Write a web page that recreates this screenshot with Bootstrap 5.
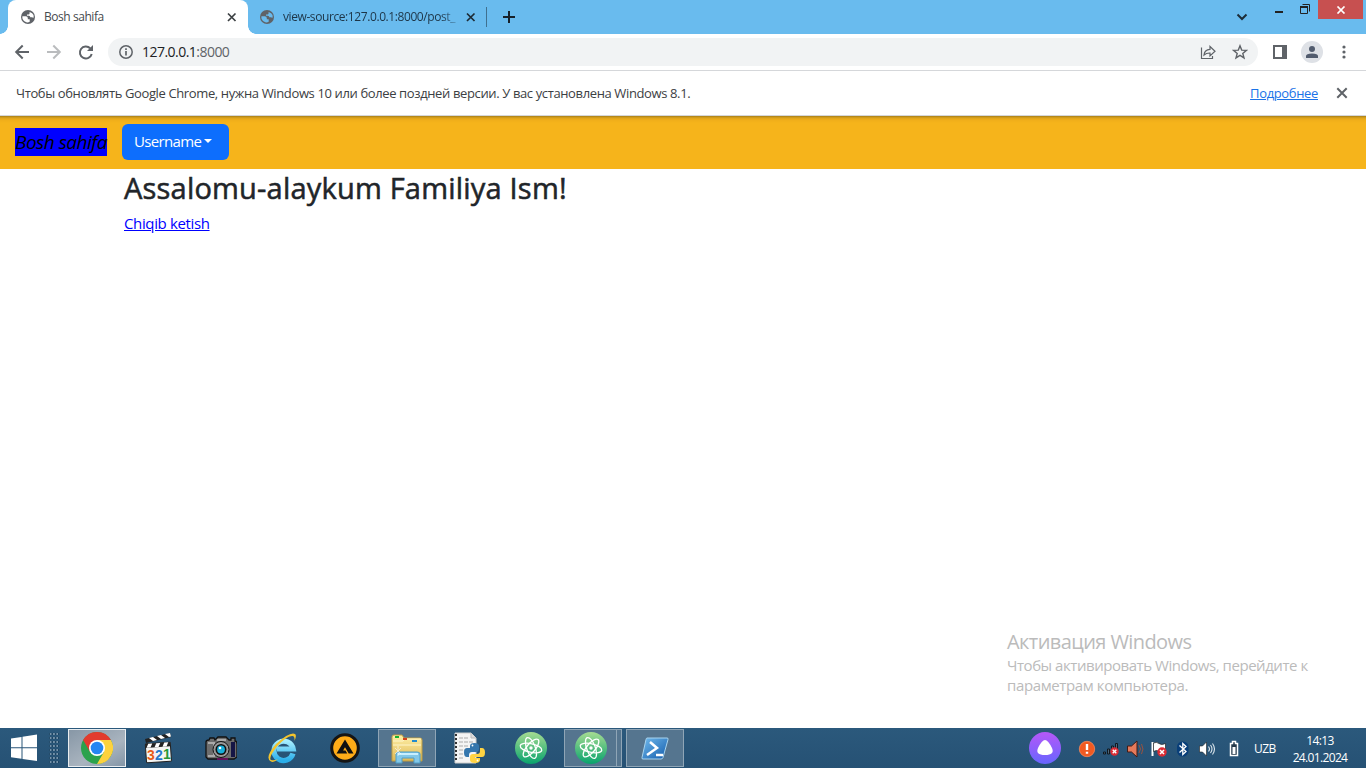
<!DOCTYPE html>
<html lang="uz">
<head>
<meta charset="utf-8">
<title>Bosh sahifa</title>
<link href="https://cdn.jsdelivr.net/npm/bootstrap@5.3.0/dist/css/bootstrap.min.css" rel="stylesheet">
<style>
body{font-family:"Open Sans","Noto Sans",sans-serif;width:1366px;height:768px;overflow:hidden;color:#212529}
svg{display:block;flex:none}
.t{white-space:nowrap;display:block}
.strip{height:34px;background:#69bbee;padding-left:8px}
.tab-on{width:240px;height:34px;background:#fff;border-radius:8px 8px 0 0;padding-left:12px;position:relative}
.tab-on::before,.tab-on::after{content:"";position:absolute;bottom:0;width:8px;height:8px}
.tab-on::before{left:-8px;background:radial-gradient(circle at 0 0,transparent 7.5px,#fff 8px)}
.tab-on::after{right:-8px;background:radial-gradient(circle at 100% 0,transparent 7.5px,#fff 8px)}
.tab-off{width:238px;height:34px;padding-left:11px;border:0}
.tab-text{font-size:12px;line-height:16px;margin-left:8px;color:#45494d}
.tab-off .tab-text{width:174px;color:#1d3547;-webkit-mask-image:linear-gradient(90deg,#000 158px,rgba(0,0,0,.3) 174px)}
.sep{width:1px;height:20px;background:#3f708f}
.winclose{width:45px;height:19px;background:#c75050}
.tools{height:36px;background:#fff}
.omni{width:1150px;height:28px;border-radius:14px;background:#f1f3f4;margin-left:14px;padding-left:10px}
.url{font-size:14px;line-height:20px;color:#202124;margin-left:8px}
.url span{color:#5f6368}
.avatar{width:22px;height:22px;background:#dee1e6}
.info{height:46px;border-top:1px solid #d5d7da;border-bottom:1px solid #d5d7da;padding:0 17px 0 16px;color:#3c4043;font-size:13px;background:#fff}
.info .t{padding-top:2px}
.info a{color:#1a73e8}
.site{height:53px;background:linear-gradient(#a87f19 0,#dca31b 2px,#f0ae1a 4px,#f6b41b 7px);padding:0 0 2px 15px}
.brand{background:#00f;color:#000;font-size:19px;font-style:italic;height:28px;line-height:28px;width:92px}
.userbtn{width:107px;height:36px;margin-left:15px;padding:0 0 1px 12px;font-size:15px;text-align:left;background:#0d6efd;border:0;border-radius:6px}
.userbtn::after{margin-left:3px}
.main{padding-left:124px}
.main h2{font-size:29px;line-height:36px;font-weight:400;-webkit-text-stroke:.55px #212529;margin:1px 0 5px}
.main a{color:#00f;font-size:15px;line-height:20px}
.activate{width:330px;margin:0 29px 33px auto;color:#bbb}
.bar{height:40px;background:linear-gradient(#2b597c,#265174);color:#fff}
.task{width:58px;height:38px}
.task.open{background:#55758f;border:1px solid #8fa5b6}
.task.cur{background:linear-gradient(150deg,#8797a6,#a9b4bf 60%,#8496a7);border:1px solid #e9edf0}
.stack2{width:6px;height:38px;background:#55758f;border:1px solid #8fa5b6;border-left:0}
.dots{width:10px;height:32px;margin:0 9px 0 1px;background:radial-gradient(circle,#8faac0 .5px,#163c59 1.2px,transparent 1.6px) 0 0/3.3px 4px}
.clock{width:70px;font-size:12px;line-height:17px}
</style>
</head>
<body class="d-flex flex-column bg-white">
<svg width="0" height="0" class="position-absolute">
<defs>
<linearGradient id="atomg" x2="0" y2="1"><stop stop-color="#a6dc92"/><stop offset="1" stop-color="#08a36d"/></linearGradient>
<linearGradient id="folder" x2="0" y2="1"><stop stop-color="#fff0a8"/><stop offset="1" stop-color="#dfb955"/></linearGradient>
<linearGradient id="ieg" x2="0" y2="1"><stop stop-color="#a6edff"/><stop offset="1" stop-color="#29aeea"/></linearGradient>
<linearGradient id="alice" x2="0" y2="1"><stop stop-color="#b558f8"/><stop offset="1" stop-color="#6865ff"/></linearGradient>
<linearGradient id="psg" x2="1" y2="1"><stop stop-color="#72bbed"/><stop offset="1" stop-color="#125bab"/></linearGradient>
<symbol id="globe" viewBox="0 0 16 16"><circle cx="8" cy="8" r="7" fill="#5f6368"/><path d="M2.400 7.200h3.400q2 0 2 1.900v1.200h1.900v2.500q-1.600.9-3.400.5-2.700-.8-3.700-3.300-.4-1.400-.2-2.800M9.600 2.900v1.300q0 1.200-1.300 1.200H7v1.300h1.800q1.500 0 1.500 1.600h1.500q1 0 1.600.7.500-1.500.1-2.900-.8-2.400-3.800-3.200" fill="#fff"/></symbol>
<symbol id="globe2" viewBox="0 0 16 16"><circle cx="8" cy="8" r="7" fill="#5f6368"/><path d="M2.400 7.200h3.400q2 0 2 1.900v1.200h1.900v2.500q-1.600.9-3.400.5-2.700-.8-3.700-3.300-.4-1.400-.2-2.800M9.600 2.900v1.300q0 1.200-1.300 1.200H7v1.300h1.800q1.500 0 1.500 1.600h1.500q1 0 1.600.7.500-1.500.1-2.900-.8-2.400-3.800-3.200" fill="#69bbee"/></symbol>
<symbol id="atom" viewBox="0 0 32 32"><circle cx="16" cy="16" r="16" fill="url(#atomg)"/><g fill="none" stroke="#fff" stroke-width="1.3"><ellipse cx="16" cy="16" rx="11" ry="4.3" transform="rotate(12 16 16)"/><ellipse cx="16" cy="16" rx="11" ry="4.3" transform="rotate(70 16 16)"/><ellipse cx="16" cy="16" rx="11" ry="4.3" transform="rotate(130 16 16)"/></g><circle cx="16" cy="16" r="1.7" fill="#fff"/></symbol>
<symbol id="bad" viewBox="0 0 10 10"><circle cx="5" cy="5" r="4.7" fill="#dc2c35"/><path d="m3 3 4 4m0-4-4 4" stroke="#fff" stroke-width="1.5"/></symbol>
</defs></svg>

<header class="strip d-flex flex-shrink-0 align-items-center">
 <div class="tab-on d-flex align-items-center">
  <svg width="16" height="16"><use href="#globe"/></svg>
  <span class="tab-text t" style="width:180px"><span style="letter-spacing:-.45px">Bosh sahifa</span></span>
  <svg width="16" height="16" viewBox="0 0 16 16"><path d="m4 4.500 7.500 7.500m0-7.500L4 12" stroke="#3c4043" stroke-width="1.700"/></svg>
 </div>
 <div class="tab-off d-flex align-items-center">
  <svg width="16" height="16"><use href="#globe2"/></svg>
  <span class="tab-text t" style="letter-spacing:-.41px">view-source:127.0.0.1:8000/post_</span>
  <svg width="16" height="16" viewBox="0 0 16 16" style="margin-left:6px"><path d="m4 4.500 7.500 7.500m0-7.500L4 12" stroke="#1d2b35" stroke-width="1.700"/></svg>
 </div>
 <div class="sep"></div>
 <svg width="14" height="14" viewBox="0 0 14 14" style="margin-left:15px"><path d="M7 1v12M1 7h12" stroke="#17212a" stroke-width="2"/></svg>
 <svg class="ms-auto" width="12" height="10" viewBox="0 0 12 10" style="margin-right:25px"><path d="m1.500 2.500 4.500 4.500 4.500-4.500" fill="none" stroke="#1c2d39" stroke-width="2"/></svg>
 <div class="d-flex align-self-start">
  <svg width="45" height="20" viewBox="0 0 45 20"><path d="M2 12h8" stroke="#222" stroke-width="2"/><path d="M27.500 6.500h7v7h-7zM29.500 4.500h7v7" fill="none" stroke="#222"/><path d="M27 7h8" stroke="#222" stroke-width="2"/></svg>
  <div class="winclose d-flex align-items-center justify-content-center" style="margin-right:3px"><svg width="10" height="8" viewBox="0 0 10 8"><path d="m1.500.5 7 7m0-7-7 7" stroke="#fff" stroke-width="1.700"/></svg></div>
 </div>
</header>

<div class="tools d-flex flex-shrink-0 align-items-center">
 <svg width="94" height="28" viewBox="0 0 94 28"><g fill="none" stroke-width="2"><path d="M29 14H16.500m6.200-6.500L16.200 14l6.500 6.500" stroke="#5f6368"/><path d="M47 14h12.500M53.300 7.500l6.500 6.500-6.500 6.500" stroke="#babcbe"/><path d="M90.200 10.300A6 6 0 1 0 91.700 16" stroke="#5f6368"/></g><path d="M93 7v6h-6z" fill="#5f6368"/></svg>
 <div class="omni d-flex align-items-center">
  <svg width="16" height="16" viewBox="0 0 16 16"><circle cx="8" cy="8" r="6.200" fill="none" stroke="#5f6368" stroke-width="1.500"/><path d="M8 7v4.500M8 4.300v1.700" stroke="#5f6368" stroke-width="1.700"/></svg>
  <span class="url t" style="letter-spacing:-.53px">127.0.0.1<span>:8000</span></span>
  <svg class="ms-auto" width="16" height="16" viewBox="0 0 16 16" style="margin-right:16px"><path d="M1.500 3.500v11h11V12M4 11q.5-5.500 6-5.700V2.500l5 4.800-5 4.600V9Q6.500 8.800 4 11z" fill="none" stroke="#5f6368" stroke-width="1.200"/></svg>
  <svg width="16" height="16" viewBox="0 0 16 16" style="margin-right:10px"><path d="m8 1.800 1.700 4.300 4.700.3-3.600 3 1.200 4.500L8 11.400l-4 2.500 1.200-4.500-3.600-3 4.700-.3z" fill="none" stroke="#5f6368" stroke-width="1.400"/></svg>
 </div>
 <svg width="14" height="14" viewBox="0 0 14 14" style="margin-left:15px"><path d="M0 0h14v14H0zM2 2v10h7V2z" fill="#5f6368" fill-rule="evenodd"/></svg>
 <div class="avatar rounded-circle d-flex align-items-center justify-content-center" style="margin-left:14px"><svg width="14" height="14" viewBox="0 0 14 14"><circle cx="7" cy="4" r="3" fill="#525c6e"/><path d="M1 13v-2q0-2.500 6-2.500t6 2.500v2z" fill="#525c6e"/></svg></div>
 <svg width="4" height="16" viewBox="0 0 4 16" style="margin-left:19px"><g fill="#5f6368"><circle cx="2" cy="3" r="1.600"/><circle cx="2" cy="8" r="1.600"/><circle cx="2" cy="13" r="1.600"/></g></svg>
</div>

<div class="info d-flex flex-shrink-0 align-items-center">
 <span class="t" style="letter-spacing:-.373px">Чтобы обновлять Google Chrome, нужна Windows 10 или более поздней версии. У вас установлена Windows 8.1.</span>
 <a href="#" class="t ms-auto" style="letter-spacing:-.35px">Подробнее</a>
 <svg width="14" height="14" viewBox="0 0 14 14" style="margin-left:17px"><path d="m2.300 2.300 9.400 9.400m0-9.400-9.400 9.400" stroke="#5f6368" stroke-width="2"/></svg>
</div>

<nav class="site navbar flex-shrink-0 justify-content-start flex-nowrap">
 <span class="brand t" style="letter-spacing:-.5px">Bosh sahifa</span>
 <button class="userbtn btn btn-primary dropdown-toggle" type="button" style="letter-spacing:-.65px">Username</button>
</nav>

<main class="main flex-grow-1">
 <h2><span class="t" style="letter-spacing:.2px">Assalomu-alaykum Familiya Ism!</span></h2>
 <a href="#" style="letter-spacing:-.36px">Chiqib ketish</a>
</main>
<div class="activate flex-shrink-0">
 <span class="t" style="font-size:20px;line-height:26px;letter-spacing:-.58px">Активация Windows</span>
 <span class="t" style="font-size:15px;line-height:20px;letter-spacing:-.45px">Чтобы активировать Windows, перейдите к</span>
 <span class="t" style="font-size:15px;line-height:20px;letter-spacing:-.38px">параметрам компьютера.</span>
</div>

<footer class="bar d-flex flex-shrink-0 align-items-center">
 <svg width="48" height="40" viewBox="0 0 48 40"><path d="m11 10.500 10.500-1.600V19.300H11zM22.500 8.700 37 6.600v12.700H22.500zM11 20.300h10.500v10.400L11 29.200zM22.500 20.300H37V33l-14.500-2.100z" fill="#fff"/></svg>
 <div class="dots"></div>
 <div class="d-flex gap-1">
  <div class="task cur d-flex align-items-center justify-content-center"><svg width="32" height="32" viewBox="0 0 32 32"><circle cx="16" cy="16" r="16" fill="#2ba24c"/><path d="M16 8h13.860A16 16 0 0 1 16 32l6.930-12z" fill="#fdd23e"/><path d="M2.140 8A16 16 0 0 1 29.860 8H16L9.070 20z" fill="#e33b2e"/><circle cx="16" cy="16" r="8" fill="#fff"/><circle cx="16" cy="16" r="6.300" fill="#2586f2"/></svg></div>
  <div class="task d-flex align-items-center justify-content-center"><svg width="32" height="32" viewBox="0 0 32 32"><g transform="rotate(-4 16 22)"><rect x="3" y="11" width="25" height="19" rx="1" fill="#f4f4f2" stroke="#222"/><path d="M3 11h25v4H3z" fill="#222"/><path d="m6 11-2 4h4l2-4zm8 0-2 4h4l2-4zm8 0-2 4h4l2-4z" fill="#fff"/></g><path d="m2 7 25-6 1 4-25 6z" fill="#222"/><path d="m6 6 4 3 4-1-4-3zm8-2 4 3 4-1-4-3zm8-2 4 3 2-.500-1-3.500z" fill="#fff"/><g font-family="Liberation Sans" font-size="14" font-weight="700"><text x="4" y="28" fill="#e85b18">3</text><text x="12" y="27.500" fill="#2478cb">2</text><text x="20" y="27" fill="#249837">1</text></g></svg></div>
  <div class="task d-flex align-items-center justify-content-center"><svg width="32" height="32" viewBox="0 0 32 32"><path d="M1 10q0-2 3-2l1-2h4l1 2 3-3h8l3 3h2V6h4v3q2 0 2 3v13l-3 2H3l-2-2z" fill="#6d6d6d" stroke="#111" stroke-width="1.300"/><path d="M12 8h9M3 11h6v13H3" stroke="#aaa" stroke-width="2" fill="none"/><path d="M26 10h4v15h-4z" fill="#151545"/><path d="M12 27h11" stroke="#631058" stroke-width="2"/><circle cx="16" cy="17.500" r="8" fill="#999" stroke="#111"/><circle cx="16" cy="17.500" r="5.500" fill="#111"/><circle cx="16" cy="17.500" r="3.900" fill="#16aeda"/><circle cx="15" cy="16" r="1.300" fill="#fff"/></svg></div>
  <div class="task d-flex align-items-center justify-content-center"><svg width="32" height="32" viewBox="0 0 32 32"><path d="M26 21.500A9.700 9.700 0 1 1 26.200 17H10" fill="none" stroke="url(#ieg)" stroke-width="5.200"/><path d="M4 29.500Q-3 26 9 12 23-.5 28 2q2 1.500-.5 7Q28 3.500 25 4 19 4.500 10 14.500 1 26 4 28q3 1 7-1-4 4-7 2.500" fill="#f3c42d"/></svg></div>
  <div class="task d-flex align-items-center justify-content-center"><svg width="32" height="32" viewBox="0 0 32 32"><circle cx="16" cy="16" r="13.300" fill="#ffac18" stroke="#151515" stroke-width="3"/><path d="m16 7.500 8.500 14h-4.800L16 15.300l-1.900 3.200h2.400l1.800 3H7.500z" fill="#111"/></svg></div>
  <div class="task open d-flex align-items-center justify-content-center"><svg width="34" height="32" viewBox="0 0 34 32"><path d="M2 5q0-2 2-2h8l2 3h16q2 0 2 2v21H2z" fill="url(#folder)" stroke="#bd9c43"/><path d="M3 9h10l2-2h16M3 13h28" stroke="#fff6ca" fill="none"/><path d="M5 4h4v2H5z" fill="#16b330"/><path d="M13 6h4v2h-4z" fill="#d4411c"/><path d="M22 8h5v2h-5z" fill="#238bce"/><path d="M6 31V22q0-2 3-2h18q3 0 3 2v9h-6v-5H12v5z" fill="#83c8e8" stroke="#4e9ec8"/><path d="M8 22h20" stroke="#c8efff" stroke-width="2"/><path d="m5 16 6 6m-6 0 6-6M8 14v10" stroke="#fff" opacity=".600"/></svg></div>
  <div class="task d-flex align-items-center justify-content-center"><svg width="32" height="32" viewBox="0 0 32 32"><path d="M2 1h16l5 5v25H2z" fill="#f4f4f4" stroke="#ccc"/><path d="M18 1v5h5" fill="#ddd" stroke="#bbb"/><path d="M3 2v28" stroke="#333" stroke-width="2" stroke-dasharray="2 2"/><path d="M6 6h9M6 10h14M6 14h10M6 18h6M6 22h4M6 26h5" stroke="#aaa" stroke-dasharray="4 1"/><path d="M17 17h5v-1h-8q-3 0-3 4.500t3 4.500h2v-2q0-3 3-3h4q3 0 3-3v-3q0-3-4.500-3T17 14z" fill="#3476ad"/><path d="M27 16h2q3 0 3 4.500T29 25h-7v1h5v2q0 3-5 3t-5-3v-3q0-3 3-3h4q3 0 3-3z" fill="#ffd342"/><circle cx="19.500" cy="13.500" r=".9" fill="#fff"/><circle cx="24.500" cy="28.500" r=".9" fill="#fff"/></svg></div>
  <div class="task d-flex align-items-center justify-content-center"><svg width="32" height="32"><use href="#atom"/></svg></div>
  <div class="d-flex task"><div class="task open d-flex align-items-center justify-content-center" style="width:54px"><svg width="32" height="32"><use href="#atom"/></svg></div><div class="stack2 flex-shrink-0" style="width:5px"></div></div>
  <div class="task open d-flex align-items-center justify-content-center"><svg width="32" height="32" viewBox="0 0 32 32"><path d="M8 6h20q1.500 0 1 1.500l-5 18Q23.500 27 22 27H4q-1.500 0-1-1.500l4-18Q7.300 6 8 6z" fill="url(#psg)" stroke="#a8d4ef"/><path d="m11 10 7 6-10 7M17 23h7" fill="none" stroke="#fff" stroke-width="2.500"/></svg></div>
 </div>
 <svg class="ms-auto" width="222" height="40" viewBox="1028 0 222 40">
  <circle cx="1045" cy="20" r="16" fill="url(#alice)"/><path d="M1045 12q3 0 7 8 3 7-7 7t-7-7q4-8 7-8z" fill="#fff"/>
  <circle cx="1087" cy="21" r="7.700" fill="#f15a22" stroke="#ff9062" stroke-width=".7"/><path d="M1087 16v6m0 1.700v2" stroke="#fff" stroke-width="2.400"/>
  <path d="M1103.500 26v-2h2v2zm4 0v-5h2v5zm4 0v-8h2v8zm4 0V15.500h2V26z" fill="#52687a" stroke="#111820"/>
  <use href="#bad" x="1110" y="19" width="9" height="9"/>
  <path d="M1127.500 18h4l5.500-5v16l-5.500-5h-4z" fill="#e57a5b" stroke="#451b15"/><path d="M1139 17q3 4 0 8M1141.500 16q3 5 0 10" fill="none" stroke="#985240"/>
  <path d="M1152.500 14v14" stroke="#fff" stroke-width="2"/><path d="M1153.500 15q3-1.500 5.500.5t6.500 0v8h-6q-3-2-6 0z" fill="#fff" stroke="#222" stroke-width=".7"/>
  <use href="#bad" x="1157" y="19" width="10" height="10"/>
  <rect x="1177" y="13.500" width="11.500" height="15" rx="5.500" fill="#083e79"/><path d="m1179.500 17.500 6.500 6-3.200 3v-11l3.200 3-6.500 6" fill="none" stroke="#fff" stroke-width="1.300"/>
  <path d="M1199.500 18h3l4-4v14l-4-4h-3z" fill="#fff" stroke="#222" stroke-width=".6"/><path d="M1208.500 18.500q2 2.500 0 5M1210.500 17q3 4 0 8M1212.500 15.500q4 5.500 0 11" fill="none" stroke="#dce6ed" stroke-width="1.100"/>
  <path d="M1230.500 15.500h2v-2h3v2h2v12h-7z" fill="#25394a" stroke="#fff" stroke-width="1.500"/><path d="M1232.500 19h3v7h-3z" fill="#fff"/>
 </svg>
 <span class="t" style="font-size:12px;width:36px;margin-left:4px;padding-top:2px;letter-spacing:-.5px">UZB</span>
 <div class="clock text-center" style="margin:2px 11px 0 -5px;letter-spacing:-.65px">14:13<br>24.01.2024</div>
</footer>
<script src="https://cdn.jsdelivr.net/npm/bootstrap@5.3.0/dist/js/bootstrap.bundle.min.js"></script>
</body>
</html>
